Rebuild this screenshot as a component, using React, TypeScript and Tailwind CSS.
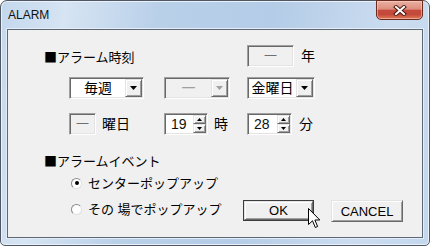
import React from 'react';

const FONT = "font-['Liberation_Sans','Noto_Sans_CJK_JP',sans-serif]";
const CJK = "font-['Noto_Sans_CJK_JP',sans-serif]";

// classic 3D edges
const sunken =
  'border border-t-[#a0a0a0] border-l-[#a0a0a0] border-r-white border-b-white shadow-[inset_1px_1px_0_#696969,inset_-1px_-1px_0_#e3e3e3]';
const raised =
  'border border-t-[#e3e3e3] border-l-[#e3e3e3] border-r-[#696969] border-b-[#696969] shadow-[inset_1px_1px_0_#ffffff,inset_-1px_-1px_0_#a0a0a0] bg-[#f0f0f0]';

const Tri = ({ up = false, color = '#000', w = 7, h = 4 }: { up?: boolean; color?: string; w?: number; h?: number }) => (
  <svg width={w} height={h} viewBox={`0 0 ${w} ${h}`}>
    <polygon points={up ? `${w / 2},0 ${w},${h} 0,${h}` : `0,0 ${w},0 ${w / 2},${h}`} fill={color} />
  </svg>
);

function Combo({ label, className, disabled }: { label: string; className: string; disabled?: boolean }) {
  return (
    <div className={`${sunken} ${disabled ? 'bg-[#f0f0f0]' : 'bg-white'} ${className} h-[22px] flex items-stretch p-[1px]`}>
      <span className={`flex-1 flex items-center justify-center text-[14px] leading-none ${disabled ? 'text-[#a0a0a0]' : 'text-black'}`}>
        {label}
      </span>
      <div className={`${raised} w-[17px] flex items-center justify-center`}>
        <Tri color={disabled ? '#a0a0a0' : '#000'} />
      </div>
    </div>
  );
}

function Spin({ value, className }: { value: string; className: string }) {
  return (
    <div className={`${sunken} bg-white ${className} h-[22px] flex items-stretch p-[1px]`}>
      <span className="flex-1 flex items-center pl-[5px] text-[14px] leading-none text-[#111]">{value}</span>
      <div className="w-[13px] flex flex-col">
        <div className={`${raised} flex-1 flex items-center justify-center`}>
          <Tri up w={5} h={3} />
        </div>
        <div className={`${raised} flex-1 flex items-center justify-center`}>
          <Tri w={5} h={3} />
        </div>
      </div>
    </div>
  );
}

function Field({ className }: { className: string }) {
  return (
    <div className={`${sunken} bg-[#f0f0f0] ${className} h-[22px] flex items-center justify-center text-[13px] text-[#707070]`}>
      一
    </div>
  );
}

const Radio = ({ checked }: { checked?: boolean }) => (
  <div className="w-[11px] h-[11px] rounded-full bg-white border border-t-[#8a8a8a] border-l-[#8a8a8a] border-r-[#e0e0e0] border-b-[#e0e0e0] flex items-center justify-center">
    {checked && <div className="w-[4px] h-[4px] rounded-full bg-black" />}
  </div>
);

const Cursor = () => (
  <svg width="13" height="21" viewBox="0 0 13 21" className="absolute left-[64px] top-[7px]">
    <path d="M0.5 0.5 L0.5 16.5 L4.5 12.8 L7.3 19.5 L9.6 18.5 L6.9 12 L11.8 12 Z" fill="#fff" stroke="#000" strokeWidth="1" strokeLinejoin="round" />
  </svg>
);

export default function App() {
  return (
    <div className={`w-[430px] h-[246px] bg-white ${FONT}`}>
      <div className="w-full h-full rounded-t-[7px] rounded-b-[5px] border border-[#4f5864] shadow-[inset_0_0_0_1px_#eaf1f9] bg-[linear-gradient(100deg,#c3d7ed_0%,#d6e4f3_14%,#b9d0e9_34%,#b4cce7_58%,#cbdcf0_84%,#c3d7ed_100%)] flex flex-col">
        {/* title bar */}
        <div className="h-[28px] flex items-start shrink-0">
          <span className="pl-[7px] pt-[7px] text-[12px] leading-[14px] text-[#111]">ALARM</span>
          <div className="ml-auto mr-[6px] -mt-px w-[47px] h-[20px] rounded-b-[5px] border border-[#6b2a20] bg-[linear-gradient(to_bottom,#eab0a2_0%,#dd8e7e_45%,#c54a3c_52%,#c34a3a_75%,#e07a58_100%)] shadow-[inset_0_0_0_1px_rgba(255,220,210,0.5)] flex items-center justify-center">
            <svg width="14" height="11" viewBox="0 0 14 11">
              <path d="M3 2 L11 9 M11 2 L3 9" stroke="#4a1a12" strokeWidth="4" strokeLinecap="square" />
              <path d="M3 2 L11 9 M11 2 L3 9" stroke="#fff" strokeWidth="2" strokeLinecap="square" />
            </svg>
          </div>
        </div>

        {/* client area */}
        <div className="mx-[6px] mb-[7px] flex-1 border border-[#5e6874] bg-[#f0f0f0] text-black shadow-[0_0_0_1px_#e4edf7] pt-[15px]">
          <div className="h-[22px] flex items-center">
            <span className={`w-[239px] pl-[36px] text-[13px] leading-none ${CJK}`}>■アラーム時刻</span>
            <Field className="w-[47px]" />
            <span className="ml-[7px] text-[14px] leading-none">年</span>
          </div>

          <div className="mt-[10px] h-[22px] flex pl-[61px]">
            <div className="w-[95px]">
              <Combo label="毎週" className="w-[75px]" />
            </div>
            <div className="w-[83px]">
              <Combo label="一" className="w-[66px]" disabled />
            </div>
            <Combo label="金曜日" className="w-[68px]" />
          </div>

          <div className="mt-[14px] h-[22px] flex items-center pl-[61px]">
            <div className="w-[95px] flex items-center">
              <Field className="w-[27px]" />
              <span className="ml-[6px] text-[14px] leading-none">曜日</span>
            </div>
            <div className="w-[83px] flex items-center">
              <Spin value="19" className="w-[44px]" />
              <span className="ml-[6px] text-[14px] leading-none">時</span>
            </div>
            <Spin value="28" className="w-[45px]" />
            <span className="ml-[7px] text-[14px] leading-none">分</span>
          </div>

          <div className={`mt-[15px] h-[20px] flex items-center pl-[36px] text-[13px] leading-none ${CJK}`}>■アラームイベント</div>

          <div className="mt-[3px] h-[20px] flex items-center pl-[63px]">
            <Radio checked />
            <span className="ml-[6px] text-[13px] leading-none">センターポップアップ</span>
          </div>

          <div className="mt-[6px] flex items-start pl-[63px]">
            <div className="w-[172px] h-[20px] flex items-center">
              <Radio />
              <span className="ml-[6px] text-[13px] leading-none">その 場でポップアップ</span>
            </div>
            <div className="relative mt-px w-[71px] h-[21px] border border-[#3c3c3c]">
              <div className={`${raised} w-full h-full flex items-center justify-center text-[13px] leading-none`}>OK</div>
              <Cursor />
            </div>
            <div className={`${raised} ml-[17px] mt-px w-[72px] h-[22px] flex items-center justify-center text-[13px] leading-none`}>
              CANCEL
            </div>
          </div>
        </div>
      </div>
    </div>
  );
}
